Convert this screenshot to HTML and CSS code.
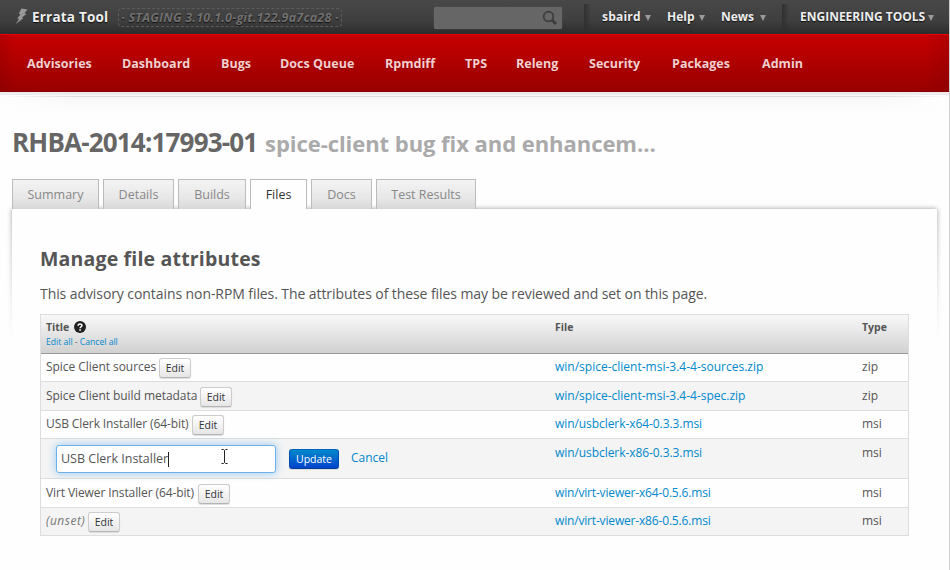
FILE: index.html
```
<!DOCTYPE html>
<html lang="en">
<head>
<meta charset="utf-8">
<title>Errata Tool</title>
<link rel="stylesheet" href="styles.css">
</head>
<body>
<div class="page">
  <header class="topbar">
    <svg class="bolt" width="14" height="17" viewBox="0 0 14 17"><path d="M6.500 .5 12.500 1.500 9.500 5 11.300 6 7 9.500 8.300 10.200 .8 16 4 11 2.300 10.200 5.500 6.500 3.800 5.500Z" fill="#999"/></svg>
    <span class="brand">Errata Tool</span>
    <span class="staging">· STAGING 3.10.1.0-git.122.9a7ca28 ·</span>
    <div class="search"><svg width="16" height="16" viewBox="0 0 16 16" fill="none" stroke="#3c3c3c"><circle cx="6.500" cy="6.500" r="4.800" stroke-width="1.700"/><path d="M10 10 14 14" stroke-width="3"/></svg></div>
    <div class="user">
      <span class="m1">sbaird</span><i></i><span class="m2">Help</span><i></i><span class="m3">News</span><i></i>
    </div>
    <div class="tools"><span>ENGINEERING TOOLS</span><i></i></div>
  </header>
  <nav class="nav">
    <a>Advisories</a><a>Dashboard</a><a>Bugs</a><a>Docs Queue</a><a>Rpmdiff</a><a>TPS</a><a>Releng</a><a>Security</a><a>Packages</a><a>Admin</a>
  </nav>
  <div class="fade"></div>
  <h1><span class="id">RHBA-2014:17993-01</span><span class="synopsis">spice-client bug fix and enhancem…</span></h1>
  <div class="tabs">
    <a>Summary</a><a>Details</a><a>Builds</a><a class="active">Files</a><a>Docs</a><a>Test Results</a>
  </div>
  <main class="panel">
    <h2>Manage file attributes</h2>
    <p class="intro">This advisory contains non-RPM files. The attributes of these files may be reviewed and set on this page.</p>
    <table>
      <colgroup><col class="c1"><col class="c2"><col class="c3"></colgroup>
      <thead>
        <tr><th><div class="title">Title <svg width="12" height="12" viewBox="0 0 12 12"><circle cx="6" cy="6" r="6" fill="#222"/><path d="M4.100 4.700C4.100 2.300 8 2.500 7.900 4.500 7.900 5.700 6.100 5.800 6.100 7.300" fill="none" stroke="#fff" stroke-width="1.500"/><path d="M5.300 8.200h1.600v1.500H5.300z" fill="#fff"/></svg></div><div class="all"><a>Edit all</a> - <a>Cancel all</a></div></th><th>File</th><th>Type</th></tr>
      </thead>
      <tbody>
        <tr><td><div class="name"><span class="n1">Spice Client sources</span><button>Edit</button></div></td><td><a>win/spice-client-msi-3.4-4-sources.zip</a></td><td>zip</td></tr>
        <tr class="alt"><td><div class="name"><span class="n2">Spice Client build metadata</span><button>Edit</button></div></td><td><a>win/spice-client-msi-3.4-4-spec.zip</a></td><td>zip</td></tr>
        <tr><td><div class="name"><span class="n3">USB Clerk Installer (64-bit)</span><button>Edit</button></div></td><td><a class="tight">win/usbclerk-x64-0.3.3.msi</a></td><td>msi</td></tr>
        <tr class="alt editing"><td><div class="form"><div class="field"><span>USB Clerk Installer</span><b class="caret"></b><svg class="ibeam" width="9" height="17" viewBox="0 0 9 17" fill="none"><path d="M1 1.500h2.500l1 1 1-1H8M4.500 2.500v12M1 15.500h2.500l1-1 1 1H8" stroke="#fff" stroke-width="3"/><path d="M1.500 1.500h2l1 1 1-1h2M4.500 2.500v12M1.500 15.500h2l1-1 1 1h2" stroke="#222"/></svg></div><button class="primary">Update</button><a class="cancel">Cancel</a></div></td><td><a class="tight">win/usbclerk-x86-0.3.3.msi</a></td><td>msi</td></tr>
        <tr class="tall"><td><div class="name"><span class="n5">Virt Viewer Installer (64-bit)</span><button>Edit</button></div></td><td><a class="tighter">win/virt-viewer-x64-0.5.6.msi</a></td><td>msi</td></tr>
        <tr class="alt last"><td><div class="name"><span class="n6">(unset)</span><button>Edit</button></div></td><td><a class="tighter">win/virt-viewer-x86-0.5.6.msi</a></td><td>msi</td></tr>
      </tbody>
    </table>
  </main>
</div>
</body>
</html>
```
FILE: styles.css
```
* { box-sizing: border-box; }
html, body { height: 100%; }
body { margin: 0; background: #fefefe; color: #555; font: 12px/20px "Open Sans", "Noto Sans", sans-serif; overflow: hidden; }
.page { height: 570px; border-right: 1px solid #ccc; overflow: hidden; }
span, a, th, td, p { white-space: nowrap; }

.topbar { height: 34px; display: flex; align-items: flex-start; background: linear-gradient(#484848, #3f3f3f 60%, #2c2c2c); color: #eee; font-weight: 700; text-shadow: 0 1px 1px #111; }
.bolt { margin: 8px 0 0 15px; flex: none; }
.brand { width: 78px; margin: 7px 0 0 3px; font-size: 13.500px; letter-spacing: .2px; }
.staging { width: 224px; height: 19px; margin: 8px 0 0 8px; border: 1px dashed #5c5c5c; border-radius: 4px; color: #707070; font-size: 12.500px; letter-spacing: .22px; line-height: 17px; font-style: italic; display: flex; justify-content: center; }
.search { width: 128px; height: 22px; margin: 7px 0 0 91.500px; background: #666; border-radius: 2px; box-shadow: 0 0 1px #777; display: flex; justify-content: flex-end; padding: 3px 4px; flex: none; }
.user { width: 198px; height: 28px; margin: 4px 0 0 22.500px; padding: 3px 0 0 18px; display: flex; background: linear-gradient(90deg, #303030, transparent 7px); }
.tools { height: 28px; margin-top: 4px; padding: 3px 0 0 18px; display: flex; background: linear-gradient(90deg, #303030, transparent 7px); font-size: 12px; }
.topbar i { width: 6px; height: 6px; margin: 8px 0 0 3px; background: #999; clip-path: polygon(0 0, 100% 0, 50% 100%); flex: none; }
.m1 { width: 40px; letter-spacing: .2px; } .m2 { width: 29px; margin-left: 16px; } .m3 { width: 34px; margin-left: 16px; margin-right: 2px; }
.tools span { width: 126px; letter-spacing: 0; }
.topbar .tools i { margin-left: 2px; }

.nav { height: 58px; padding: 19px 27px 0; display: grid; grid-template-columns: 65px 69px 29px 75px 50px 21px 43px 53px 60px 40px; column-gap: 30px; background: linear-gradient(90deg, rgba(120,0,0,.25), transparent 14px, transparent 925px, rgba(120,0,0,.25)), linear-gradient(#c60000, #980000); border-top: 1px solid #e00; border-bottom: 1px solid #820000; color: #f6cfcf; font-size: 12.500px; font-weight: 700; text-shadow: 0 1px 1px #800; }
.nav a { letter-spacing: .03px; }
.fade { height: 30px; border-top: 3px solid #eeeaed; background: linear-gradient(90deg, transparent, #ddd 8%, #ddd 92%, transparent) 0 1px / 100% 1px no-repeat, linear-gradient(90deg, #fefefe, transparent 8%, transparent 92%, #fefefe), linear-gradient(#f7f7f7, #fefefe 20px); }
h1 { height: 57px; margin: 0 0 0 12px; line-height: 41px; color: #666; display: flex; font-size: 26px; }
.id { width: 253px; letter-spacing: -.82px; }
.synopsis { color: #aaa; font-size: 22px; line-height: 42px; letter-spacing: -.05px; }

.tabs { height: 30px; padding-left: 12px; display: flex; gap: 4px; position: relative; }
.tabs a { height: 30px; border: 1px solid #bbb; border-bottom: 0; background: linear-gradient(#f3f3f3, #e8e8e8 60%, #d8d8d8); color: #888; line-height: 30px; text-align: center; font-size: 12.500px; }
.tabs a:nth-child(1) { width: 87px; } .tabs a:nth-child(2) { width: 71px; } .tabs a:nth-child(3) { width: 68px; }
.tabs a:nth-child(4) { width: 57px; } .tabs a:nth-child(5) { width: 61px; } .tabs a:nth-child(6) { width: 100px; }
.tabs .active { background: #fefefe; color: #333; }

.panel { width: 925px; height: 380px; margin-left: 12px; padding: 0 28px; position: relative; background: #fefefe; }
.panel::before { content: ""; position: absolute; z-index: -1; inset: 0; box-shadow: 0 0 5px #999; }
.panel::after { content: ""; position: absolute; z-index: -1; inset: 0 -8px 0; background: linear-gradient(transparent, #fefefe 130px); }
h2 { margin: 0; padding-top: 36px; font-size: 19.500px; line-height: 28px; letter-spacing: .18px; }
.intro { margin: 11px 0 10px; font-size: 14px; letter-spacing: -.08px; }

table { width: 869px; table-layout: fixed; border: 1px solid #ddd; border-bottom: 0; border-spacing: 0; }
.c1 { width: 508px; } .c2 { width: 307px; }
th, td { padding: 0 6px; text-align: left; vertical-align: top; }
td { height: 28px; border-bottom: 1px solid #ddd; padding-top: 3px; }
td:first-child, th:first-child { padding-left: 5px; }
thead { background: linear-gradient(#f8f8f8, #d0d0d0); }
th { height: 39px; padding-top: 2px; border-bottom: 1px solid #999; font-size: 10.500px; }
.title { display: flex; align-items: center; gap: 5px; height: 20px; }
.all { padding-top: 1px; font-size: 8.600px; font-weight: 400; line-height: 9px; }
a { color: #08c; }
.nav a { color: inherit; }
.alt { background: #f4f4f4; }
.alt td, .tall td { height: 29px; padding-top: 4px; }
.last td { height: 28px; padding-top: 3px; }
.tight { letter-spacing: -.07px; }
.tighter { letter-spacing: -.17px; }
.name { display: flex; height: 20px; }
button { width: 32px; height: 20px; margin-top: 1px; padding: 0; border: 1px solid #ccc; border-bottom-color: #b4b4b4; border-radius: 3px; background: linear-gradient(#fff, #e6e6e6); color: #333; font: 10.500px/16px "Open Sans", sans-serif; box-shadow: 0 1px 1px #ddd; flex: none; }
.n1 { width: 113px; letter-spacing: -.05px; } .n2 { width: 154px; letter-spacing: -.05px; } .n3 { width: 146px; letter-spacing: -.1px; } .n5 { width: 152px; letter-spacing: -.1px; } .n6 { width: 42px; font-style: italic; color: #777; letter-spacing: .5px; }
.editing td { height: 40px; }
.form { display: flex; padding: 2px 0 0 10px; }
.field { width: 220px; height: 28px; padding: 3px 4px; display: flex; position: relative; background: #fff; border: 1px solid #6bb2ec; border-radius: 3px; box-shadow: 0 0 8px rgba(82,168,236,.6); font-size: 12.500px; }
.caret { width: 1px; height: 15px; margin-top: 3px; background: #222; }
.ibeam { position: absolute; left: 163px; top: 2px; }
.primary { width: 50px; margin: 4px 0 0 13px; border-color: #0064c0 #0050b0 #003f90; background: linear-gradient(#08c, #04c); color: #fff; }
.cancel { margin: 3px 0 0 12px; }
```
